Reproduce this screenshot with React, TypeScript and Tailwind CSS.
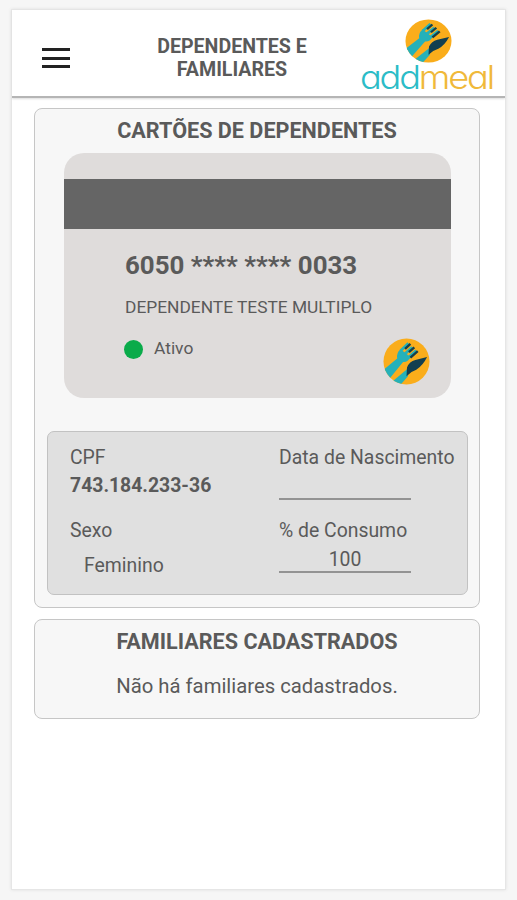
import React from "react";

const Cutlery = ({ className }: { className?: string }) => (
	<svg viewBox="0 0 48 48" preserveAspectRatio="none" className={className} aria-hidden="true">
		<defs>
			<clipPath id="disc">
				<circle cx="24" cy="24" r="23.5" />
			</clipPath>
		</defs>
		<circle cx="24" cy="24" r="23.5" fill="#faad1b" />
		<g clipPath="url(#disc)">
			{/* fork */}
			<path d="M0 33 L14.5 21 Q13.5 15 18 11.5 L28 19.5 Q25.5 25 20.5 24.5 L7 41 Z" fill="#25b1b9" />
			<path d="M18 13 L26 5.5 M22 16.5 L30 9.5 M26 20 L34 13" stroke="#25b1b9" strokeWidth="3" fill="none" />
			<path d="M22.5 11 L28 6 M26.5 14.5 L32 9.5 M28 20 L35.5 13.5" stroke="#17404a" strokeWidth="2.4" fill="none" />
			{/* knife */}
			<path d="M24.5 32 L9 45 L16 50 L25.5 39 Z" fill="#25b1b9" />
			<path d="M24 39 L24.5 30 Q27 24 33 22.5 L45 19.5 Q41 28 34 32.5 Q29 34 24 39 Z" fill="#123f50" />
		</g>
	</svg>
);

const Logo = () => (
	<div className="flex w-[134px] flex-col items-center">
		<Cutlery className="h-[44px] w-[47px]" />
		<svg width="134" height="30" viewBox="0 0 134 30" className="-mt-[3px] overflow-visible">
			<text
				x="-1"
				y="28.5"
				fontSize="32.5"
				textLength="133"
				lengthAdjust="spacingAndGlyphs"
				className="font-['Inter'] font-light tracking-[-0.06em] [font-feature-settings:'cv11']"
			>
				<tspan fill="#2bbcc7">add</tspan>
				<tspan fill="#f0b93a">meal</tspan>
			</text>
		</svg>
	</div>
);

const Page = () => {
	return (
		<div className="box-border h-[900px] w-[517px] bg-[#f6f6f6] pl-[11px] pt-[9px] font-['Roboto',sans-serif] text-[#5a5a5a]">
			<div className="h-[881px] w-[495px] border border-[#e6e6e6] bg-white shadow-[0_0_3px_#e0e0e0]">
				<header className="flex h-[88px] border-b-2 border-[#b5b5b5] shadow-[0_1px_2px_#dcdcdc]">
					<button className="mt-[38px] ml-[30px] flex h-[20px] w-[28px] flex-col justify-between" aria-label="Menu">
						<span className="h-[3px] w-full bg-[#222]" />
						<span className="h-[3px] w-full bg-[#222]" />
						<span className="h-[3px] w-full bg-[#222]" />
					</button>
					<h1 className="mt-[25px] ml-[72px] w-[180px] text-center text-[19.6px] leading-[23px] font-bold">
						DEPENDENTES E FAMILIARES
					</h1>
					<div className="mt-[9px] ml-[39px]">
						<Logo />
					</div>
				</header>

				<main className="flex flex-col gap-[11px] pt-[10px] pl-[22px]">
					<section className="h-[500px] w-[446px] rounded-[8px] border-[1.5px] border-[#c6c6c6] bg-[#f7f7f7]">
						<h2 className="mt-[10px] text-center text-[21.6px] leading-[24px] font-bold">
							CARTÕES DE DEPENDENTES
						</h2>
						<div className="relative mt-[10px] ml-[29px] h-[245px] w-[387px] rounded-[20px] bg-[#dfdcdb] pt-[26px]">
							<div className="h-[50px] bg-[#656565]" />
							<div className="pl-[61px]">
								<p className="mt-[20px] text-[25.9px] leading-[32px] font-bold">6050 **** **** 0033</p>
								<p className="mt-[14px] text-[17.35px] leading-[24px]">DEPENDENTE TESTE MULTIPLO</p>
								<div className="mt-[17px] flex items-center">
									<span className="-ml-px mt-[2px] size-[19px] rounded-full bg-[#0aab4a]" />
									<span className="ml-[11px] text-[17.4px] leading-[24px]">Ativo</span>
								</div>
							</div>
							<Cutlery className="absolute right-[21px] bottom-[13px] size-[47px]" />
						</div>

						<div className="mt-[33px] ml-[12px] grid h-[164px] w-[421px] grid-cols-[209px_1fr] grid-rows-[73px_1fr] rounded-[7px] border-[1.5px] border-[#c2c2c2] bg-[#e0e0e0] pt-[13px] pl-[22px] text-[19.4px] leading-[26px]">
							<div>
								<p>CPF</p>
								<p className="mt-[2px] font-bold">743.184.233-36</p>
							</div>
							<div>
								<p>Data de Nascimento</p>
								<div className="mt-[2px] h-[27px] w-[132px] border-b-2 border-[#939393]" />
							</div>
							<div>
								<p>Sexo</p>
								<p className="mt-[9px] pl-[14px]">Feminino</p>
							</div>
							<div>
								<p>% de Consumo</p>
								<div className="mt-[3px] h-[26px] w-[132px] border-b-2 border-[#939393] text-center">100</div>
							</div>
						</div>
					</section>

					<section className="h-[100px] w-[446px] rounded-[8px] border-[1.5px] border-[#c6c6c6] bg-[#f7f7f7] text-center text-[20.3px] leading-[24px]">
						<h2 className="mt-[10px] text-[21.6px] font-bold">FAMILIARES CADASTRADOS</h2>
						<p className="mt-[20px]">Não há familiares cadastrados.</p>
					</section>
				</main>
			</div>
		</div>
	);
};

export default Page;
